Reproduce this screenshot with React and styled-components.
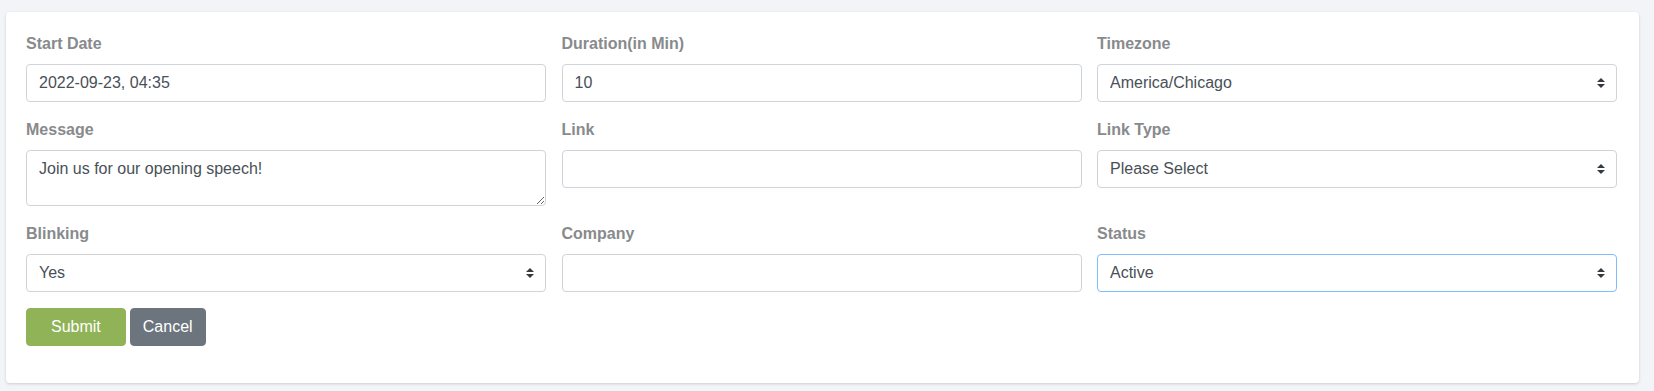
import React from "react";
import styled, { createGlobalStyle } from "styled-components";

const GlobalStyle = createGlobalStyle`
  html, body {
    margin: 0;
    background: #f3f4f8;
  }
  body {
    font-family: "Liberation Sans", Arial, sans-serif;
    font-size: 16px;
    line-height: 1.5;
    color: #495057;
  }
  * { box-sizing: border-box; }
`;

const Page = styled.div`
  padding: 12px 15px 9px 6px;
`;

const Card = styled.div`
  background: #fff;
  border-radius: 4px;
  box-shadow: 0 1px 3px rgba(0, 0, 0, 0.16);
  padding: 20px 22px 37px 20px;
`;

const Grid = styled.div`
  display: grid;
  grid-template-columns: repeat(3, 1fr);
  column-gap: 15.5px;
`;

const Group = styled.div`
  margin-bottom: 16px;
`;

const Label = styled.label`
  display: block;
  font-weight: bold;
  color: #888a8c;
  margin-bottom: 8px;
  line-height: 24px;
`;

const fieldBase = `
  display: block;
  width: 100%;
  font-family: "Liberation Sans", Arial, sans-serif;
  font-size: 16px;
  line-height: 24px;
  color: #495057;
  background: #fff;
  border: 1px solid #ced4da;
  border-radius: 4px;
  padding: 6px 12px;
  outline: none;
`;

const Input = styled.input`
  ${fieldBase}
  height: 38px;
`;

const TextArea = styled.textarea`
  ${fieldBase}
  height: 56px;
  resize: vertical;
`;

const SelectWrap = styled.div`
  position: relative;
`;

const Select = styled.select`
  ${fieldBase}
  height: 38px;
  appearance: none;
  -webkit-appearance: none;
  padding-right: 28px;
  border-color: ${(p) => (p.$focused ? "#80bdff" : "#ced4da")};
`;

const Caret = styled.svg`
  position: absolute;
  right: 12px;
  top: 50%;
  margin-top: -5px;
  width: 8px;
  height: 10px;
  pointer-events: none;
`;

const Actions = styled.div`
  display: flex;
  gap: 4px;
`;

const Button = styled.button`
  font-family: "Liberation Sans", Arial, sans-serif;
  font-size: 16px;
  line-height: 24px;
  height: 38px;
  color: #fff;
  border: 1px solid ${(p) => p.$bg};
  background: ${(p) => p.$bg};
  border-radius: 4px;
  padding: 6px ${(p) => p.$px}px;
  cursor: pointer;
`;

const Arrows = () => (
  <Caret viewBox="0 0 4 5">
    <path fill="#343a40" d="M2 0L0 2h4zm0 5L0 3h4z" />
  </Caret>
);

const SelectField = ({ value, options, focused }) => (
  <SelectWrap>
    <Select defaultValue={value} $focused={focused}>
      {options.map((o) => (
        <option key={o}>{o}</option>
      ))}
    </Select>
    <Arrows />
  </SelectWrap>
);

export default function App() {
  return (
    <>
      <GlobalStyle />
      <Page>
        <Card>
          <Grid>
            <Group>
              <Label>Start Date</Label>
              <Input defaultValue="2022-09-23, 04:35" />
            </Group>
            <Group>
              <Label>Duration(in Min)</Label>
              <Input defaultValue="10" />
            </Group>
            <Group>
              <Label>Timezone</Label>
              <SelectField value="America/Chicago" options={["America/Chicago", "America/New_York", "UTC"]} />
            </Group>

            <Group>
              <Label>Message</Label>
              <TextArea defaultValue="Join us for our opening speech!" />
            </Group>
            <Group>
              <Label>Link</Label>
              <Input defaultValue="" />
            </Group>
            <Group>
              <Label>Link Type</Label>
              <SelectField value="Please Select" options={["Please Select", "Zoom", "YouTube"]} />
            </Group>

            <Group>
              <Label>Blinking</Label>
              <SelectField value="Yes" options={["Yes", "No"]} />
            </Group>
            <Group>
              <Label>Company</Label>
              <Input defaultValue="" />
            </Group>
            <Group>
              <Label>Status</Label>
              <SelectField value="Active" options={["Active", "Inactive"]} focused />
            </Group>
          </Grid>
          <Actions>
            <Button $bg="#8fb356" $px={24}>Submit</Button>
            <Button $bg="#6c757d" $px={12}>Cancel</Button>
          </Actions>
        </Card>
      </Page>
    </>
  );
}
